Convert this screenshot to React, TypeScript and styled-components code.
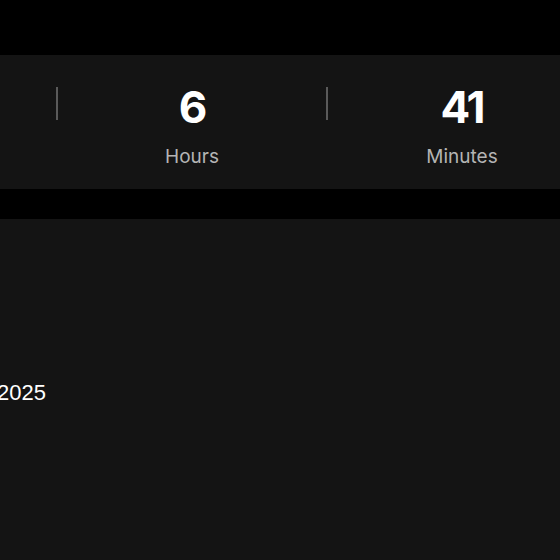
import * as React from 'react'
import styled, { createGlobalStyle } from 'styled-components'

const GlobalStyle = createGlobalStyle`
  html, body {
    margin: 0;
    padding: 0;
    background: #000000;
    overflow: hidden;
  }
  body {
    font-family: Inter, "Noto Sans", sans-serif;
    color: #ffffff;
  }
`
const Page = styled.div`
  width: 560px;
  height: 560px;
  overflow: hidden;
  display: flex;
  flex-direction: column;
  padding-top: 55px;
  box-sizing: border-box;
`
const CountdownPanel = styled.section`
  background: #141414;
  height: 134px;
  display: flex;
  padding-left: 56px;
  flex-shrink: 0;
`
const Unit = styled.div`
  width: 270px;
  display: flex;
  flex-shrink: 0;
`
const Divider = styled.span`
  width: 2px;
  height: 33px;
  margin-top: 32px;
  background: #5a5a5a;
  flex-shrink: 0;
`
const UnitBody = styled.div`
  flex: 1;
  display: flex;
  flex-direction: column;
  align-items: center;
  padding-top: 27px;
`
const Value = styled.div`
  font-size: 44px;
  font-weight: 700;
  line-height: 50px;
  letter-spacing: -2px;
  color: #ffffff;
`
const Label = styled.div`
  font-size: 19px;
  line-height: 24px;
  margin-top: 13px;
  color: #b4b4b4;
`
const Gap = styled.div`
  height: 30px;
  flex-shrink: 0;
`
const InfoPanel = styled.section`
  background: #141414;
  flex: 1;
  padding-top: 160px;
`
const DateText = styled.div`
  font-family: "Liberation Sans", Arial, sans-serif;
  font-size: 22px;
  line-height: 28px;
  margin-left: -3px;
  color: #ffffff;
`

interface IUnit {
  value: string
  label: string
}

const units: IUnit[] = [
  { value: '6', label: 'Hours' },
  { value: '41', label: 'Minutes' }
]

export default function App() {
  return (
    <Page>
      <GlobalStyle />
      <CountdownPanel>
        {units.map(unit => (
          <Unit key={unit.label}>
            <Divider />
            <UnitBody>
              <Value>{unit.value}</Value>
              <Label>{unit.label}</Label>
            </UnitBody>
          </Unit>
        ))}
      </CountdownPanel>
      <Gap />
      <InfoPanel>
        <DateText>2025</DateText>
      </InfoPanel>
    </Page>
  )
}
